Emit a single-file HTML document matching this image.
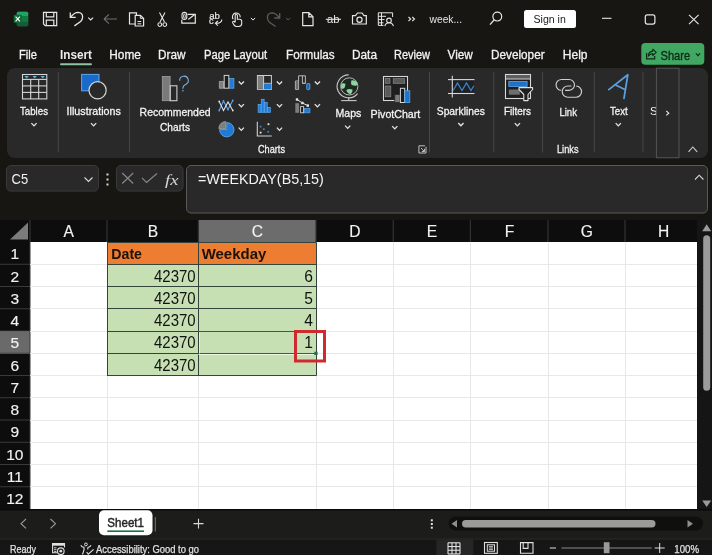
<!DOCTYPE html>
<html><head><meta charset="utf-8">
<style>
*{margin:0;padding:0}
html,body{width:712px;height:555px;overflow:hidden;background:#181613}
svg{display:block;font-family:"Liberation Sans",sans-serif;will-change:transform}
</style></head><body>
<svg width="712" height="555" viewBox="0 0 712 555">
<rect x="0" y="0" width="712" height="555" rx="0" fill="#181613"/>
<rect x="16.8" y="11.7" width="11.4" height="14.5" rx="1.5" fill="#107c41"/>
<rect x="16.8" y="11.7" width="11.4" height="4.8" rx="1.5" fill="#21a366"/>
<rect x="16.8" y="21.4" width="11.4" height="4.8" rx="1.5" fill="#185c37"/>
<rect x="16.8" y="16" width="11.4" height="5.5" rx="0" fill="#107c41"/>
<rect x="13.7" y="14.8" width="8.2" height="8.2" rx="1" fill="#0d6b37"/>
<path d="M15.6,16.6 L19.9,21.3 M19.9,16.6 L15.6,21.3" stroke="#ffffff" fill="none" stroke-width="1.1" />
<path d="M43.5,12.3 H56.7 V25.6 H45.2 L43.5,23.9 Z" stroke="#e6e6e6" fill="none" stroke-width="1.2" />
<path d="M46.3,12.3 V16.9 H53.8 V12.3" stroke="#e6e6e6" fill="none" stroke-width="1.2" />
<path d="M46.3,25.6 V20.2 H53.8 V25.6" stroke="#e6e6e6" fill="none" stroke-width="1.2" />
<path d="M70.3,12.4 V17.4 H75.7" stroke="#e6e6e6" fill="none" stroke-width="1.3" />
<path d="M70.8,16.9 Q74.5,12.3 78,12.3 Q82.6,12.5 82.6,17 Q82.6,19.6 80.6,21.6 L74.4,25.9" stroke="#e6e6e6" fill="none" stroke-width="1.3" />
<path d="M88.3,17.6 L90.7,20.0 L93.10000000000001,17.6" stroke="#e6e6e6" fill="none" stroke-width="1.1" />
<path d="M104,19 H117 M104,19 L109,14.4 M104,19 L109,23.6" stroke="#6e6e6e" fill="none" stroke-width="1.1" />
<path d="M135,24 H129.5 V12.8 H136.5 V15" stroke="#e6e6e6" fill="none" stroke-width="1.2" />
<path d="M135.2,15.4 H140.5 L143.6,18.5 V26 H135.2 Z" stroke="#e6e6e6" fill="none" stroke-width="1.2" />
<path d="M137.5,21.5 H141.2 M137.5,23.8 H141.2" stroke="#e6e6e6" fill="none" stroke-width="1" />
<path d="M140.3,15.6 V18.3 H143.4" stroke="#e6e6e6" fill="none" stroke-width="1" />
<path d="M159.5,12.5 L164.5,22 M165,12.5 L160,22" stroke="#e6e6e6" fill="none" stroke-width="1.1" />
<circle cx="159.8" cy="24.6" r="1.9" stroke="#e6e6e6" fill="none" stroke-width="1.1"/>
<circle cx="164.8" cy="24.6" r="1.9" stroke="#e6e6e6" fill="none" stroke-width="1.1"/>
<path d="M187.6,14.3 H195.3 V23.2 H181.8 V19.8" stroke="#e6e6e6" fill="none" stroke-width="1.2" />
<path d="M188.3,19.4 L194.7,14.6" stroke="#e6e6e6" fill="none" stroke-width="1.2" />
<rect x="182" y="12.4" width="4.8" height="7" rx="2.4" fill="none" stroke="#e6e6e6" stroke-width="1.1"/>
<rect x="183.6" y="14.2" width="1.7" height="3.8" rx="0.85" fill="none" stroke="#e6e6e6" stroke-width="0.9"/>
<text x="209.2" y="18.9" font-size="9.2" fill="#e6e6e6" stroke="#e6e6e6" stroke-width="0.2" textLength="10.7" lengthAdjust="spacingAndGlyphs">ab</text>
<text x="209.1" y="24.4" font-size="9.2" fill="#e6e6e6" stroke="#e6e6e6" stroke-width="0.2">c</text>
<path d="M221.8,19.4 Q221.8,23.3 215.6,23.3 M217.9,21 L215.4,23.3 L217.9,25.6" stroke="#e6e6e6" fill="none" stroke-width="1.1" />
<path d="M233.2,19.2 A3.9,3.9 0 1 1 240.2,17.2" stroke="#e6e6e6" fill="none" stroke-width="1.1" />
<path d="M235.2,22 V15.4 A1.1,1.1 0 0 1 237.4,15.4 V19.2 H239.6 A2.1,2.1 0 0 1 241.7,21.3 V23.6 A2.9,2.9 0 0 1 238.8,26.5 H236.6 A3,3 0 0 1 234.1,25.1 L232.7,22.8 A1,1 0 0 1 234.5,21.8 L235.2,22.6" stroke="#e6e6e6" fill="none" stroke-width="1.1" />
<path d="M250.9,17.9 L253,20.1 L255.1,17.9" stroke="#e6e6e6" fill="none" stroke-width="1" />
<g transform="translate(350,0.6) scale(-1,1)"><path d="M70.3,12.4 V17.4 H75.7" stroke="#5c5c5c" fill="none" stroke-width="1.3"/><path d="M70.8,16.9 Q74.5,12.3 78,12.3 Q82.6,12.5 82.6,17 Q82.6,19.6 80.6,21.6 L74.4,25.9" stroke="#5c5c5c" fill="none" stroke-width="1.3"/></g>
<path d="M286.09999999999997,17.9 L288.2,20.1 L290.3,17.9" stroke="#5c5c5c" fill="none" stroke-width="1" />
<path d="M302.7,12.6 H308.8 L313,16.8 V25.6 H302.7 Z M308.8,12.6 V16.8 H313" stroke="#e6e6e6" fill="none" stroke-width="1.2" />
<text x="327" y="22.5" font-size="11" fill="#e6e6e6" textLength="12.5" lengthAdjust="spacingAndGlyphs">ab</text>
<line x1="325.8" y1="19.3" x2="341" y2="19.3" stroke="#e6e6e6" stroke-width="1.1"/>
<path d="M352.5,15.6 H355.5 L357.5,13 H362 L364,15.6 H366.3 V24 H352.5 Z" stroke="#e6e6e6" fill="none" stroke-width="1.2" />
<circle cx="359.5" cy="19.7" r="2.6" stroke="#e6e6e6" fill="none" stroke-width="1.2"/>
<path d="M378.3,12.8 H392.6 V17 M378.3,12.8 V25.4 H383.5 M378.3,16.3 H386 M381.5,12.8 V25.4 M378.3,19.6 H384.5 M378.3,22.8 H383.5" stroke="#e6e6e6" fill="none" stroke-width="1" />
<circle cx="389" cy="20.4" r="2.3" stroke="#e6e6e6" fill="none" stroke-width="1.1"/>
<path d="M384.8,26.2 A4.4,4.4 0 0 1 393.4,26.2" stroke="#e6e6e6" fill="none" stroke-width="1.1" />
<path d="M408.5,17 L410.7,19 L408.5,21 M412.3,17 L414.5,19 L412.3,21" stroke="#e6e6e6" fill="none" stroke-width="1.1" />
<text x="429.6" y="23.2" font-size="11.7" fill="#e6e6e6" textLength="32.4" lengthAdjust="spacingAndGlyphs">week...</text>
<circle cx="497.3" cy="16.6" r="4.4" stroke="#e6e6e6" fill="none" stroke-width="1.2"/>
<line x1="494" y1="20" x2="490" y2="24.6" stroke="#e6e6e6" stroke-width="1.3"/>
<rect x="524" y="10" width="52" height="18" rx="2.5" fill="#ffffff"/>
<text x="533.5" y="23" font-size="11.7" fill="#1b1b1b" textLength="32.3" lengthAdjust="spacingAndGlyphs">Sign in</text>
<line x1="602" y1="18.3" x2="611.5" y2="18.3" stroke="#e6e6e6" stroke-width="1.1"/>
<rect x="645.3" y="14.9" width="9.6" height="9.2" rx="2" fill="none" stroke="#e6e6e6" stroke-width="1.2"/>
<path d="M689,14.8 L698.6,24.2 M698.6,14.8 L689,24.2" stroke="#e6e6e6" fill="none" stroke-width="1.1" />
<text x="19" y="59.4" font-size="12" fill="#f2f2f2" stroke="#f2f2f2" stroke-width="0.3" textLength="18" lengthAdjust="spacingAndGlyphs">File</text>
<text x="109.3" y="59.4" font-size="12" fill="#f2f2f2" stroke="#f2f2f2" stroke-width="0.3" textLength="31.6" lengthAdjust="spacingAndGlyphs">Home</text>
<text x="158" y="59.4" font-size="12" fill="#f2f2f2" stroke="#f2f2f2" stroke-width="0.3" textLength="27.5" lengthAdjust="spacingAndGlyphs">Draw</text>
<text x="204" y="59.4" font-size="12" fill="#f2f2f2" stroke="#f2f2f2" stroke-width="0.3" textLength="63" lengthAdjust="spacingAndGlyphs">Page Layout</text>
<text x="286" y="59.4" font-size="12" fill="#f2f2f2" stroke="#f2f2f2" stroke-width="0.3" textLength="48.7" lengthAdjust="spacingAndGlyphs">Formulas</text>
<text x="352" y="59.4" font-size="12" fill="#f2f2f2" stroke="#f2f2f2" stroke-width="0.3" textLength="25" lengthAdjust="spacingAndGlyphs">Data</text>
<text x="394" y="59.4" font-size="12" fill="#f2f2f2" stroke="#f2f2f2" stroke-width="0.3" textLength="36" lengthAdjust="spacingAndGlyphs">Review</text>
<text x="447.6" y="59.4" font-size="12" fill="#f2f2f2" stroke="#f2f2f2" stroke-width="0.3" textLength="25.2" lengthAdjust="spacingAndGlyphs">View</text>
<text x="491" y="59.4" font-size="12" fill="#f2f2f2" stroke="#f2f2f2" stroke-width="0.3" textLength="53.6" lengthAdjust="spacingAndGlyphs">Developer</text>
<text x="562.8" y="59.4" font-size="12" fill="#f2f2f2" stroke="#f2f2f2" stroke-width="0.3" textLength="24.7" lengthAdjust="spacingAndGlyphs">Help</text>
<text x="60" y="59.4" font-size="12" fill="#ececec" textLength="32" lengthAdjust="spacingAndGlyphs" font-weight="bold">Insert</text>
<rect x="60" y="63.2" width="32" height="2" rx="1" fill="#8fc4a3"/>
<rect x="641.3" y="43" width="63" height="21.8" rx="4" fill="#40a863"/>
<path d="M646.6,53 V58.8 H654.7 V55.9" stroke="#0e2a17" fill="none" stroke-width="1.2" />
<path d="M648.2,56.2 Q648.6,51.4 652.8,51.1 V49.2 L656.2,52.4 L652.8,55.6 V53.6 Q650.2,53.6 648.2,56.2 Z" stroke="#0e2a17" fill="none" stroke-width="1.1" stroke-linejoin="round"/>
<text x="660.5" y="59.7" font-size="12.2" fill="#0e2a17" stroke="#0e2a17" stroke-width="0.35" textLength="29.6" lengthAdjust="spacingAndGlyphs">Share</text>
<path d="M695.9,53.4 L698,55.6 L700.1,53.4" stroke="#0e2a17" fill="none" stroke-width="1.2" />
<rect x="7" y="68" width="701" height="90" rx="8" fill="#292929"/>
<line x1="58.3" y1="72" x2="58.3" y2="152.5" stroke="#474747" stroke-width="1"/>
<line x1="129.4" y1="72" x2="129.4" y2="152.5" stroke="#474747" stroke-width="1"/>
<line x1="429.5" y1="72" x2="429.5" y2="152.5" stroke="#474747" stroke-width="1"/>
<line x1="493.8" y1="72" x2="493.8" y2="152.5" stroke="#474747" stroke-width="1"/>
<line x1="542.6" y1="72" x2="542.6" y2="152.5" stroke="#474747" stroke-width="1"/>
<line x1="594.3" y1="72" x2="594.3" y2="152.5" stroke="#474747" stroke-width="1"/>
<line x1="643" y1="72" x2="643" y2="152.5" stroke="#474747" stroke-width="1"/>
<rect x="22.5" y="74.5" width="24.3" height="24.4" rx="0" fill="none" stroke="#d4d4d4" stroke-width="1.1"/>
<line x1="22.5" y1="79.4" x2="46.8" y2="79.4" stroke="#d4d4d4" stroke-width="1.1"/>
<line x1="22.5" y1="85.9" x2="46.8" y2="85.9" stroke="#d4d4d4" stroke-width="1.1"/>
<line x1="22.5" y1="92.4" x2="46.8" y2="92.4" stroke="#d4d4d4" stroke-width="1.1"/>
<line x1="30.7" y1="79.4" x2="30.7" y2="98.9" stroke="#d4d4d4" stroke-width="1.1"/>
<line x1="38.7" y1="79.4" x2="38.7" y2="98.9" stroke="#d4d4d4" stroke-width="1.1"/>
<path d="M24.400000000000002,76.1 H28.8 L26.6,78.5 Z" stroke="none" fill="#5eb4e6" stroke-width="1" />
<path d="M32.5,76.1 H36.900000000000006 L34.7,78.5 Z" stroke="none" fill="#5eb4e6" stroke-width="1" />
<path d="M40.5,76.1 H44.900000000000006 L42.7,78.5 Z" stroke="none" fill="#5eb4e6" stroke-width="1" />
<text x="20" y="114.6" font-size="11.8" fill="#f4f4f4" stroke="#f4f4f4" stroke-width="0.3" textLength="28" lengthAdjust="spacingAndGlyphs">Tables</text>
<path d="M31.4,123.15 L34,125.85 L36.6,123.15" stroke="#e6e6e6" fill="none" stroke-width="1.35" />
<rect x="81.6" y="74.4" width="17.4" height="16.4" rx="0" fill="#1a6acb" stroke="#5aa8ee" stroke-width="1"/>
<circle cx="97.6" cy="90.3" r="8.6" fill="#292929" stroke="#d4d4d4" stroke-width="1.2"/>
<text x="66.6" y="114.6" font-size="11.8" fill="#f4f4f4" stroke="#f4f4f4" stroke-width="0.3" textLength="54.2" lengthAdjust="spacingAndGlyphs">Illustrations</text>
<path d="M91.0,123.15 L93.6,125.85 L96.19999999999999,123.15" stroke="#e6e6e6" fill="none" stroke-width="1.35" />
<rect x="162.3" y="76.5" width="7.8" height="24.2" rx="0" fill="#7a7a7a" stroke="#a0a0a0" stroke-width="0.8"/>
<rect x="170.2" y="85.8" width="6.7" height="14.9" rx="0" fill="none" stroke="#cfcfcf" stroke-width="1.1"/>
<path d="M179.7,80.8 A4.3,4.3 0 1 1 185.7,84.4 Q182.9,85.6 182.9,88.2 V88.8" stroke="#74b2e0" fill="none" stroke-width="1.1" />
<circle cx="182.9" cy="90.7" r="0.8" fill="#74b2e0"/>
<text x="139.6" y="116.2" font-size="11.8" fill="#f4f4f4" stroke="#f4f4f4" stroke-width="0.3" textLength="71" lengthAdjust="spacingAndGlyphs">Recommended</text>
<text x="160" y="130.9" font-size="11.8" fill="#f4f4f4" stroke="#f4f4f4" stroke-width="0.3" textLength="30" lengthAdjust="spacingAndGlyphs">Charts</text>
<rect x="219.3" y="81.6" width="4.2" height="6.6" rx="0" fill="#7e7e7e" stroke="#a8a8a8" stroke-width="0.8"/>
<rect x="224.2" y="75.4" width="4.6" height="12.8" rx="0" fill="#1e1e1e" stroke="#cfcfcf" stroke-width="1"/>
<rect x="229.5" y="78.5" width="4.4" height="9.7" rx="0" fill="#1f7bd6" stroke="#5aa6ea" stroke-width="0.8"/>
<path d="M238.70000000000002,81.45 L241.3,84.14999999999999 L243.9,81.45" stroke="#e6e6e6" fill="none" stroke-width="1.35" />
<rect x="257.4" y="75.5" width="14" height="13.8" rx="0" fill="none" stroke="#cfcfcf" stroke-width="1"/>
<rect x="257.9" y="76" width="5.5" height="12.8" rx="0" fill="#7e7e7e"/>
<line x1="263.6" y1="75.5" x2="263.6" y2="89.3" stroke="#cfcfcf" stroke-width="1"/>
<rect x="264.1" y="83.6" width="7.3" height="5.3" rx="0" fill="#1f7bd6"/>
<line x1="263.6" y1="83.3" x2="271.4" y2="83.3" stroke="#cfcfcf" stroke-width="0.8"/>
<path d="M276.9,81.45 L279.5,84.14999999999999 L282.1,81.45" stroke="#e6e6e6" fill="none" stroke-width="1.35" />
<path d="M295.4,89.4 V81 H298.6 V75.8 H305.4 V83.3 H302.4 V75.8 M298.6,81 V89.4 H295.4 M302.4,83.3 H305.4" stroke="#b8b8b8" fill="none" stroke-width="1" />
<rect x="295.9" y="81.5" width="2.2" height="7.4" rx="0" fill="#6e6e6e"/>
<rect x="306.8" y="83.6" width="3" height="6" rx="0.5" fill="#1f5f9f" stroke="#5aa6ea" stroke-width="0.9"/>
<path d="M314.79999999999995,81.45 L317.4,84.14999999999999 L320.0,81.45" stroke="#e6e6e6" fill="none" stroke-width="1.35" />
<path d="M219.2,110.5 L223.5,101 L228,109.5 L232.8,100.5" stroke="#5aa6ea" fill="none" stroke-width="1.1" />
<path d="M219.2,101.5 L223.5,110.5 L228,102 L232.8,110.5" stroke="#e0e0e0" fill="none" stroke-width="1.1" />
<circle cx="219.2" cy="110.5" r="0.9" fill="#5aa6ea"/>
<circle cx="223.5" cy="101" r="0.9" fill="#5aa6ea"/>
<circle cx="228" cy="109.5" r="0.9" fill="#5aa6ea"/>
<circle cx="232.8" cy="100.5" r="0.9" fill="#5aa6ea"/>
<circle cx="219.2" cy="101.5" r="0.9" fill="#e0e0e0"/>
<circle cx="232.8" cy="110.5" r="0.9" fill="#e0e0e0"/>
<path d="M238.70000000000002,104.15 L241.3,106.85 L243.9,104.15" stroke="#e6e6e6" fill="none" stroke-width="1.35" />
<rect x="258.2" y="104.5" width="2.8" height="7.799999999999997" rx="0" fill="#1f7bd6" stroke="#5aa6ea" stroke-width="0.8"/>
<rect x="261.3" y="99.3" width="2.8" height="13.0" rx="0" fill="#1f7bd6" stroke="#5aa6ea" stroke-width="0.8"/>
<rect x="264.4" y="102.5" width="2.8" height="9.799999999999997" rx="0" fill="#1f7bd6" stroke="#5aa6ea" stroke-width="0.8"/>
<rect x="267.5" y="107.5" width="2.8" height="4.799999999999997" rx="0" fill="#1f7bd6" stroke="#5aa6ea" stroke-width="0.8"/>
<path d="M276.9,104.15 L279.5,106.85 L282.1,104.15" stroke="#e6e6e6" fill="none" stroke-width="1.35" />
<rect x="295.3" y="103.2" width="3.8" height="9.6" rx="0" fill="#7e7e7e"/>
<rect x="300.6" y="106.6" width="3" height="6.2" rx="0" fill="#1e1e1e" stroke="#cfcfcf" stroke-width="0.9"/>
<rect x="304.6" y="108.6" width="5.3" height="4.2" rx="0" fill="#1f7bd6" stroke="#5aa6ea" stroke-width="0.7"/>
<path d="M297,99.5 L302.4,103 L307.8,105.6" stroke="#e0e0e0" fill="none" stroke-width="1" />
<rect x="295.8" y="98.3" width="2.4" height="2.4" fill="#e8e8e8"/>
<rect x="301.2" y="101.8" width="2.4" height="2.4" fill="#e8e8e8"/>
<rect x="306.6" y="104.39999999999999" width="2.4" height="2.4" fill="#e8e8e8"/>
<path d="M314.79999999999995,104.15 L317.4,106.85 L320.0,104.15" stroke="#e6e6e6" fill="none" stroke-width="1.35" />
<path d="M226.8,129.5 V122.5 A7.2,7.2 0 1 1 219.6,129.5 Z" stroke="#5aa6ea" fill="#1f7bd6" stroke-width="0.9" />
<path d="M225.8,128.5 H218.8 A7,7 0 0 1 225.8,121.5 Z" stroke="#a8a8a8" fill="#7e7e7e" stroke-width="0.7" />
<path d="M238.70000000000002,127.65 L241.3,130.35 L243.9,127.65" stroke="#e6e6e6" fill="none" stroke-width="1.35" />
<path d="M257.3,121.8 V136 H271.8" stroke="#cfcfcf" fill="none" stroke-width="1.1" />
<rect x="267.6" y="123.3" width="1.8" height="1.8" fill="#e8e8e8"/>
<rect x="259.70000000000005" y="131.7" width="1.8" height="1.8" fill="#e8e8e8"/>
<rect x="259.70000000000005" y="125.69999999999999" width="1.8" height="1.8" fill="#3a7fc0"/>
<rect x="262.90000000000003" y="128.29999999999998" width="1.8" height="1.8" fill="#3a7fc0"/>
<rect x="267.3" y="130.9" width="1.8" height="1.8" fill="#3a7fc0"/>
<path d="M276.9,127.65 L279.5,130.35 L282.1,127.65" stroke="#e6e6e6" fill="none" stroke-width="1.35" />
<text x="258" y="152.5" font-size="11.4" fill="#f4f4f4" stroke="#f4f4f4" stroke-width="0.3" textLength="27" lengthAdjust="spacingAndGlyphs">Charts</text>
<circle cx="349.3" cy="86.4" r="8.6" fill="#1d2a21" stroke="#c8c8c8" stroke-width="0.9"/>
<path d="M351.5,80.2 Q355,79.8 357.3,82.5 Q357.6,85.5 355.5,86 Q353.5,84.8 351.8,85.3 Q350.3,83 351.5,80.2 Z" stroke="none" fill="#8fd4a2" stroke-width="1" />
<path d="M341.2,84 Q343.5,82.6 345.5,84 Q345.3,87 344,88.3 Q342,89.5 341,88 Z" stroke="none" fill="#8fd4a2" stroke-width="1" />
<path d="M346.3,90 Q349,88.3 352.5,89.5 Q353,92.5 350.5,94.2 Q347.5,94 346.3,90 Z" stroke="none" fill="#8fd4a2" stroke-width="1" />
<path d="M348.7,74.9 A11.5,11.5 0 1 0 357.6,93.6" stroke="#c8c8c8" fill="none" stroke-width="1.1" />
<line x1="348.7" y1="97.5" x2="348.7" y2="100.6" stroke="#c8c8c8" stroke-width="1.1"/>
<line x1="341.2" y1="100.6" x2="356.6" y2="100.6" stroke="#c8c8c8" stroke-width="1.1"/>
<text x="335.5" y="117.2" font-size="11.8" fill="#f4f4f4" stroke="#f4f4f4" stroke-width="0.3" textLength="25.8" lengthAdjust="spacingAndGlyphs">Maps</text>
<path d="M345.09999999999997,125.65 L347.7,128.35 L350.3,125.65" stroke="#e6e6e6" fill="none" stroke-width="1.35" />
<rect x="383.5" y="76.5" width="24" height="24" rx="0" fill="#1e1e1e" stroke="#d8d8d8" stroke-width="1.1"/>
<rect x="385.2" y="78.5" width="4.8" height="4.8" rx="0" fill="#5a5a5a" stroke="#8a8a8a" stroke-width="0.7"/>
<rect x="393.2" y="78.7" width="11.5" height="4.6" rx="0" fill="#5a5a5a" stroke="#8a8a8a" stroke-width="0.7"/>
<rect x="385.2" y="86" width="5.6" height="10.8" rx="0" fill="#5a5a5a" stroke="#8a8a8a" stroke-width="0.7"/>
<rect x="394.8" y="94.5" width="5.2" height="8" rx="0" fill="#7a7a7a" stroke="#292929" stroke-width="0.8"/>
<rect x="400.4" y="88.3" width="4.3" height="14.2" rx="0" fill="#1a1a1a" stroke="#d8d8d8" stroke-width="1"/>
<rect x="404.8" y="90.8" width="5" height="11.7" rx="0" fill="#1f72c8" stroke="#5aa6ea" stroke-width="0.8"/>
<text x="370.6" y="117.7" font-size="11.8" fill="#f4f4f4" stroke="#f4f4f4" stroke-width="0.3" textLength="49.7" lengthAdjust="spacingAndGlyphs">PivotChart</text>
<path d="M392.2,126.15 L394.8,128.85 L397.40000000000003,126.15" stroke="#e6e6e6" fill="none" stroke-width="1.35" />
<path d="M418.9,145.8 H426 V153 H418.9 Z" stroke="#bdbdbd" fill="none" stroke-width="1" />
<path d="M421,148 L424.5,151.5 M424.5,148.8 V151.5 H421.8" stroke="#bdbdbd" fill="none" stroke-width="1" />
<rect x="425" y="144.8" width="2" height="2" rx="0" fill="#292929"/>
<rect x="452.5" y="80" width="21.5" height="13.2" rx="0" fill="#1d2126"/>
<line x1="448" y1="79.6" x2="474.5" y2="79.6" stroke="#d8d8d8" stroke-width="1.1"/>
<line x1="448" y1="93.5" x2="474.5" y2="93.5" stroke="#d8d8d8" stroke-width="1.1"/>
<line x1="452.3" y1="75.8" x2="452.3" y2="97.5" stroke="#d8d8d8" stroke-width="1.1"/>
<path d="M453.2,90.5 L457.5,83 L462,90.5 L466.5,83 L471,90.5 L473.8,85.8" stroke="#3f86c8" fill="none" stroke-width="1.2" />
<text x="436.8" y="115.2" font-size="11.8" fill="#f4f4f4" stroke="#f4f4f4" stroke-width="0.3" textLength="48" lengthAdjust="spacingAndGlyphs">Sparklines</text>
<path d="M458.29999999999995,123.05000000000001 L460.9,125.75 L463.5,123.05000000000001" stroke="#e6e6e6" fill="none" stroke-width="1.35" />
<rect x="505.5" y="74.5" width="25" height="24" rx="0" fill="#1e1e1e" stroke="#d8d8d8" stroke-width="1.1"/>
<rect x="506" y="75" width="24" height="3.8" rx="0" fill="#5e5e5e"/>
<line x1="505.5" y1="79" x2="530.5" y2="79" stroke="#d8d8d8" stroke-width="1"/>
<rect x="508.8" y="81.4" width="18.3" height="5" rx="0" fill="#1f72c8" stroke="#5aa6ea" stroke-width="0.8"/>
<rect x="508.8" y="89.5" width="11" height="5.2" rx="0" fill="#6e6e6e"/>
<path d="M519,87.6 H532.6 V89.5 L528,94.5 V100.6 H523.8 V94.5 L519,89.5 Z" stroke="#e0e0e0" fill="#1e1e1e" stroke-width="1.1" stroke-linejoin="round"/>
<text x="504" y="115" font-size="11.8" fill="#f4f4f4" stroke="#f4f4f4" stroke-width="0.3" textLength="27" lengthAdjust="spacingAndGlyphs">Filters</text>
<path d="M514.8,123.15 L517.4,125.85 L520.0,123.15" stroke="#e6e6e6" fill="none" stroke-width="1.35" />
<path d="M561.2,90.3 A5.4,5.4 0 0 1 561.7,79.5 H569.1 A5.4,5.4 0 0 1 569.1,90.3 H565.1" stroke="#cfcfcf" fill="none" stroke-width="1.15" />
<path d="M576.2,86 A5.6,5.6 0 0 1 575.7,97.2 H567.8 A5.6,5.6 0 0 1 567.8,86 H571.4" stroke="#cfcfcf" fill="none" stroke-width="1.15" />
<text x="559.4" y="116" font-size="11.8" fill="#f4f4f4" stroke="#f4f4f4" stroke-width="0.3" textLength="17.6" lengthAdjust="spacingAndGlyphs">Link</text>
<text x="557" y="153" font-size="11.4" fill="#f4f4f4" stroke="#f4f4f4" stroke-width="0.3" textLength="21.5" lengthAdjust="spacingAndGlyphs">Links</text>
<path d="M608.8,89.6 L627.8,74.8 L624,98.4 M615.6,85 L625.4,89.8" stroke="#5a9fdc" fill="none" stroke-width="1.8" stroke-linejoin="round" stroke-linecap="round"/>
<text x="610" y="115" font-size="11.8" fill="#f4f4f4" stroke="#f4f4f4" stroke-width="0.3" textLength="17.7" lengthAdjust="spacingAndGlyphs">Text</text>
<path d="M615.6999999999999,123.15 L618.3,125.85 L620.9,123.15" stroke="#e6e6e6" fill="none" stroke-width="1.35" />
<text x="650" y="115.2" font-size="11.8" fill="#f4f4f4" textLength="7.5" lengthAdjust="spacingAndGlyphs">S</text>
<rect x="656.4" y="68.2" width="22.6" height="89.6" rx="0" fill="#292929" stroke="#555555" stroke-width="1"/>
<path d="M666.3,111 L668.8,113.2 L666.3,115.4" stroke="#e6e6e6" fill="none" stroke-width="1.1" />
<path d="M688.5,151.8 L692.8,147 L697.2,151.8" stroke="#cfcfcf" fill="none" stroke-width="1.1" />
<rect x="6.5" y="165.5" width="92" height="25.6" rx="4.5" fill="#292929" stroke="#3a3a3a" stroke-width="1"/>
<text x="11.5" y="184" font-size="13.8" fill="#f0f0f0" textLength="16.6" lengthAdjust="spacingAndGlyphs">C5</text>
<path d="M84.5,177.5 L88.5,181.5 L92.5,177.5" stroke="#d8d8d8" fill="none" stroke-width="1.1" />
<rect x="106.5" y="173.5" width="2" height="2" rx="0" fill="#d8d8d8"/>
<rect x="106.5" y="178.5" width="2" height="2" rx="0" fill="#d8d8d8"/>
<rect x="106.5" y="183.5" width="2" height="2" rx="0" fill="#d8d8d8"/>
<rect x="116.5" y="165.5" width="66.5" height="25.6" rx="4.5" fill="#292929" stroke="#3a3a3a" stroke-width="1"/>
<path d="M122.2,173 L133.2,183.5 M133.2,173 L122.2,183.5" stroke="#8a8a8a" fill="none" stroke-width="1.1" />
<path d="M142,177.8 L146.5,182.5 L157,173.5" stroke="#8a8a8a" fill="none" stroke-width="1.1" />
<text x="165" y="184.5" font-family="Liberation Serif" font-style="italic" font-size="15" fill="#d8d8d8" textLength="13.5" lengthAdjust="spacingAndGlyphs">fx</text>
<rect x="186.5" y="165.5" width="521" height="47.5" rx="4.5" fill="#292929" stroke="#5a5a5a" stroke-width="1"/>
<text x="198" y="184.4" font-size="15" fill="#f4f4f4" textLength="125.8" lengthAdjust="spacingAndGlyphs">=WEEKDAY(B5,15)</text>
<path d="M695,179.5 L699.2,175.2 L703.4,179.5" stroke="#d8d8d8" fill="none" stroke-width="1.1" />
<rect x="0" y="220" width="697" height="22" rx="0" fill="#0d0d0d"/>
<rect x="0" y="242" width="30" height="267" rx="0" fill="#0d0d0d"/>
<rect x="30" y="242" width="667" height="267" rx="0" fill="#ffffff"/>
<rect x="198.8" y="220" width="117" height="22" rx="0" fill="#6c6c6c"/>
<rect x="0" y="331.0" width="30" height="22.25" rx="0" fill="#6a6a6a"/>
<line x1="0" y1="331.5" x2="29.5" y2="331.5" stroke="#8a8a8a" stroke-width="1"/>
<line x1="0" y1="353.5" x2="29.5" y2="353.5" stroke="#8a8a8a" stroke-width="1"/>
<path d="M10,239.6 L28,239.6 L28,222.6 Z" stroke="none" fill="#7c7c7c" stroke-width="1" />
<line x1="107" y1="220" x2="107" y2="242" stroke="#3a3a3a" stroke-width="1"/>
<line x1="198.3" y1="220" x2="198.3" y2="242" stroke="#3a3a3a" stroke-width="1"/>
<line x1="316" y1="220" x2="316" y2="242" stroke="#3a3a3a" stroke-width="1"/>
<line x1="393.2" y1="220" x2="393.2" y2="242" stroke="#3a3a3a" stroke-width="1"/>
<line x1="470.3" y1="220" x2="470.3" y2="242" stroke="#3a3a3a" stroke-width="1"/>
<line x1="548" y1="220" x2="548" y2="242" stroke="#3a3a3a" stroke-width="1"/>
<line x1="625" y1="220" x2="625" y2="242" stroke="#3a3a3a" stroke-width="1"/>
<line x1="0" y1="264.25" x2="30" y2="264.25" stroke="#3a3a3a" stroke-width="1"/>
<line x1="0" y1="286.5" x2="30" y2="286.5" stroke="#3a3a3a" stroke-width="1"/>
<line x1="0" y1="308.75" x2="30" y2="308.75" stroke="#3a3a3a" stroke-width="1"/>
<line x1="0" y1="331.0" x2="30" y2="331.0" stroke="#3a3a3a" stroke-width="1"/>
<line x1="0" y1="353.25" x2="30" y2="353.25" stroke="#3a3a3a" stroke-width="1"/>
<line x1="0" y1="375.5" x2="30" y2="375.5" stroke="#3a3a3a" stroke-width="1"/>
<line x1="0" y1="397.75" x2="30" y2="397.75" stroke="#3a3a3a" stroke-width="1"/>
<line x1="0" y1="420.0" x2="30" y2="420.0" stroke="#3a3a3a" stroke-width="1"/>
<line x1="0" y1="442.25" x2="30" y2="442.25" stroke="#3a3a3a" stroke-width="1"/>
<line x1="0" y1="464.5" x2="30" y2="464.5" stroke="#3a3a3a" stroke-width="1"/>
<line x1="0" y1="486.75" x2="30" y2="486.75" stroke="#3a3a3a" stroke-width="1"/>
<line x1="30" y1="220" x2="30" y2="509" stroke="#3a3a3a" stroke-width="1"/>
<text x="68.8" y="237" font-size="15.6" fill="#f2f2f2" stroke="#f2f2f2" stroke-width="0.15" text-anchor="middle">A</text>
<text x="152.95000000000002" y="237" font-size="15.6" fill="#f2f2f2" stroke="#f2f2f2" stroke-width="0.15" text-anchor="middle">B</text>
<text x="257.45" y="237" font-size="15.6" fill="#f2f2f2" stroke="#f2f2f2" stroke-width="0.15" text-anchor="middle">C</text>
<text x="354.90000000000003" y="237" font-size="15.6" fill="#f2f2f2" stroke="#f2f2f2" stroke-width="0.15" text-anchor="middle">D</text>
<text x="432.05" y="237" font-size="15.6" fill="#f2f2f2" stroke="#f2f2f2" stroke-width="0.15" text-anchor="middle">E</text>
<text x="509.45" y="237" font-size="15.6" fill="#f2f2f2" stroke="#f2f2f2" stroke-width="0.15" text-anchor="middle">F</text>
<text x="586.8" y="237" font-size="15.6" fill="#f2f2f2" stroke="#f2f2f2" stroke-width="0.15" text-anchor="middle">G</text>
<text x="663.5999999999999" y="237" font-size="15.6" fill="#f2f2f2" stroke="#f2f2f2" stroke-width="0.15" text-anchor="middle">H</text>
<text x="14.8" y="259.4" font-size="15.5" fill="#f2f2f2" stroke="#f2f2f2" stroke-width="0.15" text-anchor="middle">1</text>
<text x="14.8" y="281.65" font-size="15.5" fill="#f2f2f2" stroke="#f2f2f2" stroke-width="0.15" text-anchor="middle">2</text>
<text x="14.8" y="303.9" font-size="15.5" fill="#f2f2f2" stroke="#f2f2f2" stroke-width="0.15" text-anchor="middle">3</text>
<text x="14.8" y="326.15" font-size="15.5" fill="#f2f2f2" stroke="#f2f2f2" stroke-width="0.15" text-anchor="middle">4</text>
<text x="14.8" y="348.4" font-size="15.5" fill="#f2f2f2" stroke="#f2f2f2" stroke-width="0.15" text-anchor="middle">5</text>
<text x="14.8" y="370.65" font-size="15.5" fill="#f2f2f2" stroke="#f2f2f2" stroke-width="0.15" text-anchor="middle">6</text>
<text x="14.8" y="392.9" font-size="15.5" fill="#f2f2f2" stroke="#f2f2f2" stroke-width="0.15" text-anchor="middle">7</text>
<text x="14.8" y="415.15" font-size="15.5" fill="#f2f2f2" stroke="#f2f2f2" stroke-width="0.15" text-anchor="middle">8</text>
<text x="14.8" y="437.4" font-size="15.5" fill="#f2f2f2" stroke="#f2f2f2" stroke-width="0.15" text-anchor="middle">9</text>
<text x="14.8" y="459.65" font-size="15.5" fill="#f2f2f2" stroke="#f2f2f2" stroke-width="0.15" text-anchor="middle">10</text>
<text x="14.8" y="481.9" font-size="15.5" fill="#f2f2f2" stroke="#f2f2f2" stroke-width="0.15" text-anchor="middle">11</text>
<text x="14.8" y="504.15" font-size="15.5" fill="#f2f2f2" stroke="#f2f2f2" stroke-width="0.15" text-anchor="middle">12</text>
<line x1="30" y1="264.5" x2="697" y2="264.5" stroke="#e8e8e8" stroke-width="1"/>
<line x1="30" y1="286.5" x2="697" y2="286.5" stroke="#e8e8e8" stroke-width="1"/>
<line x1="30" y1="308.5" x2="697" y2="308.5" stroke="#e8e8e8" stroke-width="1"/>
<line x1="30" y1="331.5" x2="697" y2="331.5" stroke="#e8e8e8" stroke-width="1"/>
<line x1="30" y1="353.5" x2="697" y2="353.5" stroke="#e8e8e8" stroke-width="1"/>
<line x1="30" y1="375.5" x2="697" y2="375.5" stroke="#e8e8e8" stroke-width="1"/>
<line x1="30" y1="397.5" x2="697" y2="397.5" stroke="#e8e8e8" stroke-width="1"/>
<line x1="30" y1="420.5" x2="697" y2="420.5" stroke="#e8e8e8" stroke-width="1"/>
<line x1="30" y1="442.5" x2="697" y2="442.5" stroke="#e8e8e8" stroke-width="1"/>
<line x1="30" y1="464.5" x2="697" y2="464.5" stroke="#e8e8e8" stroke-width="1"/>
<line x1="30" y1="486.5" x2="697" y2="486.5" stroke="#e8e8e8" stroke-width="1"/>
<line x1="30" y1="509.5" x2="697" y2="509.5" stroke="#e8e8e8" stroke-width="1"/>
<line x1="107.5" y1="242" x2="107.5" y2="509" stroke="#e8e8e8" stroke-width="1"/>
<line x1="198.5" y1="242" x2="198.5" y2="509" stroke="#e8e8e8" stroke-width="1"/>
<line x1="316.5" y1="242" x2="316.5" y2="509" stroke="#e8e8e8" stroke-width="1"/>
<line x1="393.5" y1="242" x2="393.5" y2="509" stroke="#e8e8e8" stroke-width="1"/>
<line x1="470.5" y1="242" x2="470.5" y2="509" stroke="#e8e8e8" stroke-width="1"/>
<line x1="548.5" y1="242" x2="548.5" y2="509" stroke="#e8e8e8" stroke-width="1"/>
<line x1="625.5" y1="242" x2="625.5" y2="509" stroke="#e8e8e8" stroke-width="1"/>
<rect x="107" y="242" width="209.0" height="22.25" rx="0" fill="#ed7d31"/>
<rect x="107" y="264.25" width="209.0" height="111.25" rx="0" fill="#c6e0b4"/>
<line x1="107" y1="242.5" x2="316.5" y2="242.5" stroke="#34443a" stroke-width="1"/>
<line x1="107" y1="264.5" x2="316.5" y2="264.5" stroke="#34443a" stroke-width="1"/>
<line x1="107" y1="286.5" x2="316.5" y2="286.5" stroke="#34443a" stroke-width="1"/>
<line x1="107" y1="308.5" x2="316.5" y2="308.5" stroke="#34443a" stroke-width="1"/>
<line x1="107" y1="331.5" x2="316.5" y2="331.5" stroke="#34443a" stroke-width="1"/>
<line x1="107" y1="353.5" x2="316.5" y2="353.5" stroke="#34443a" stroke-width="1"/>
<line x1="107" y1="375.5" x2="316.5" y2="375.5" stroke="#34443a" stroke-width="1"/>
<line x1="107.5" y1="242.5" x2="107.5" y2="375.5" stroke="#34443a" stroke-width="1"/>
<line x1="198.5" y1="242.5" x2="198.5" y2="375.5" stroke="#34443a" stroke-width="1"/>
<line x1="316.5" y1="242.5" x2="316.5" y2="375.5" stroke="#34443a" stroke-width="1"/>
<text x="111.3" y="259.4" font-size="14.6" fill="#1d1208" textLength="30.7" lengthAdjust="spacingAndGlyphs" font-weight="bold">Date</text>
<text x="201.7" y="259.4" font-size="14.6" fill="#1d1208" textLength="64.6" lengthAdjust="spacingAndGlyphs" font-weight="bold">Weekday</text>
<text x="154" y="281.65" font-size="15.6" fill="#111111" textLength="41.7" lengthAdjust="spacingAndGlyphs">42370</text>
<text x="154" y="303.9" font-size="15.6" fill="#111111" textLength="41.7" lengthAdjust="spacingAndGlyphs">42370</text>
<text x="154" y="326.15" font-size="15.6" fill="#111111" textLength="41.7" lengthAdjust="spacingAndGlyphs">42370</text>
<text x="154" y="348.4" font-size="15.6" fill="#111111" textLength="41.7" lengthAdjust="spacingAndGlyphs">42370</text>
<text x="154" y="370.65" font-size="15.6" fill="#111111" textLength="41.7" lengthAdjust="spacingAndGlyphs">42370</text>
<text x="313" y="281.65" font-size="15.6" fill="#111111" text-anchor="end">6</text>
<text x="313" y="303.9" font-size="15.6" fill="#111111" text-anchor="end">5</text>
<text x="313" y="326.15" font-size="15.6" fill="#111111" text-anchor="end">4</text>
<text x="313" y="348.4" font-size="15.6" fill="#111111" text-anchor="end">1</text>
<line x1="198.5" y1="331.5" x2="316.5" y2="331.5" stroke="#2f6440" stroke-width="1.1"/>
<line x1="198.5" y1="353.5" x2="316.5" y2="353.5" stroke="#2f6440" stroke-width="1.1"/>
<line x1="198.5" y1="354.5" x2="314" y2="354.5" stroke="#eef6ea" stroke-width="1"/>
<line x1="199.5" y1="332.5" x2="199.5" y2="353.5" stroke="#e6f0e0" stroke-width="1"/>
<rect x="314.3" y="351.7" width="3.3" height="3.3" rx="0" fill="#217346"/>
<rect x="295.5" y="331.5" width="29" height="29.5" rx="0" fill="none" stroke="#cf2a2f" stroke-width="3"/>
<rect x="697" y="220" width="15" height="289" rx="0" fill="#151515"/>
<path d="M702.2,231.3 L706.7,224.3 L711.2,231.3 Z" stroke="none" fill="#9a9a9a" stroke-width="1" />
<rect x="703.2" y="235.3" width="7" height="155.5" rx="3.5" fill="#9a9a9a"/>
<rect x="697" y="498" width="15" height="11" rx="0" fill="#151515"/>
<path d="M702.2,500.5 L706.7,507 L711.2,500.5 Z" stroke="none" fill="#9a9a9a" stroke-width="1" />
<rect x="0" y="509" width="712" height="30" rx="0" fill="#1c1d1a"/>
<line x1="0" y1="509.8" x2="712" y2="509.8" stroke="#0a0a0a" stroke-width="1.5"/>
<path d="M26,519 L21,523.7 L26,528.4" stroke="#9a9a9a" fill="none" stroke-width="1.1" />
<path d="M50.5,519 L55.5,523.7 L50.5,528.4" stroke="#9a9a9a" fill="none" stroke-width="1.1" />
<rect x="99" y="510.3" width="53.5" height="25" rx="5" fill="#ffffff"/>
<text x="107.3" y="526.6" font-size="12.6" fill="#262626" stroke="#262626" stroke-width="0.45" textLength="36.7" lengthAdjust="spacingAndGlyphs">Sheet1</text>
<rect x="107.3" y="530.4" width="36.7" height="1.6" rx="0" fill="#1e7145"/>
<line x1="155.3" y1="517" x2="155.3" y2="531.5" stroke="#7a7a7a" stroke-width="1"/>
<path d="M198.5,518.7 V528.5 M193.5,523.6 H203.5" stroke="#d8d8d8" fill="none" stroke-width="1.1" />
<rect x="430.8" y="519.3" width="2" height="2" rx="0" fill="#e0e0e0"/>
<rect x="430.8" y="523" width="2" height="2" rx="0" fill="#e0e0e0"/>
<rect x="430.8" y="526.7" width="2" height="2" rx="0" fill="#e0e0e0"/>
<rect x="448.7" y="516.4" width="254.3" height="14.4" rx="7.2" fill="#0f0f0f"/>
<path d="M457,520 L451.5,523.7 L457,527.4 Z" stroke="none" fill="#8e8e8e" stroke-width="1" />
<rect x="462" y="520" width="193.5" height="7.5" rx="3.75" fill="#9a9a9a"/>
<path d="M687.5,520 L693,523.7 L687.5,527.4 Z" stroke="none" fill="#8e8e8e" stroke-width="1" />
<rect x="0" y="539" width="712" height="16" rx="0" fill="#161616"/>
<line x1="0" y1="539" x2="712" y2="539" stroke="#2a2a2a" stroke-width="1"/>
<text x="10" y="553.3" font-size="10.5" fill="#e0e0e0" stroke="#e0e0e0" stroke-width="0.25" textLength="26" lengthAdjust="spacingAndGlyphs">Ready</text>
<path d="M57,552.8 H52.6 V543.5 H64.5 V547.5" stroke="#e0e0e0" fill="none" stroke-width="1.1" />
<rect x="52.6" y="543.5" width="11.9" height="2.2" rx="0" fill="#e0e0e0"/>
<path d="M54,547.8 H56.5 M54,549.7 H56.5 M54,551.6 H56.5" stroke="#e0e0e0" fill="none" stroke-width="0.9" />
<circle cx="60.8" cy="551.2" r="3.3" stroke="#e0e0e0" fill="#161616" stroke-width="1.1"/><circle cx="60.8" cy="551.2" r="1.4" fill="#e0e0e0"/>
<circle cx="85.9" cy="544.4" r="1.4" stroke="#e0e0e0" fill="none" stroke-width="1"/>
<path d="M80.8,545.3 Q82,547.5 84,547.3 V550 L82.5,554.5 M87.8,547.3 Q90,547.5 91,545.3 M87.8,547.3 V549.5" stroke="#e0e0e0" fill="none" stroke-width="1.1" />
<path d="M86.6,552.2 L88.3,554.2 L93.6,549.3" stroke="#e0e0e0" fill="none" stroke-width="1.1" />
<text x="96" y="553.3" font-size="10.5" fill="#e0e0e0" stroke="#e0e0e0" stroke-width="0.25" textLength="103" lengthAdjust="spacingAndGlyphs">Accessibility: Good to go</text>
<rect x="436.4" y="539.5" width="37" height="15.5" rx="0" fill="#262626"/>
<line x1="448" y1="542.8" x2="448" y2="554" stroke="#e0e0e0" stroke-width="1.1"/>
<line x1="448" y1="542.8" x2="460" y2="542.8" stroke="#e0e0e0" stroke-width="1.1"/>
<line x1="452" y1="542.8" x2="452" y2="554" stroke="#e0e0e0" stroke-width="1.1"/>
<line x1="448" y1="546.53" x2="460" y2="546.53" stroke="#e0e0e0" stroke-width="1.1"/>
<line x1="456" y1="542.8" x2="456" y2="554" stroke="#e0e0e0" stroke-width="1.1"/>
<line x1="448" y1="550.26" x2="460" y2="550.26" stroke="#e0e0e0" stroke-width="1.1"/>
<line x1="460" y1="542.8" x2="460" y2="554" stroke="#e0e0e0" stroke-width="1.1"/>
<line x1="448" y1="553.99" x2="460" y2="553.99" stroke="#e0e0e0" stroke-width="1.1"/>
<rect x="484.5" y="542.5" width="12.8" height="10.8" rx="0" fill="none" stroke="#e0e0e0" stroke-width="1.1"/>
<rect x="487.3" y="544.8" width="7.2" height="6.4" rx="0" fill="none" stroke="#e0e0e0" stroke-width="1"/>
<path d="M488.8,546.6 H493 M488.8,548 H493 M488.8,549.4 H493" stroke="#e0e0e0" fill="none" stroke-width="0.8" />
<path d="M520.5,542.6 H533 V553.3 H520.5 Z M523.2,542.6 V548.4 H528 V542.6" stroke="#e0e0e0" fill="none" stroke-width="1.1" />
<line x1="549.8" y1="548" x2="556" y2="548" stroke="#e0e0e0" stroke-width="1"/>
<line x1="561.5" y1="548" x2="651.7" y2="548" stroke="#8a8a8a" stroke-width="1.2"/>
<rect x="603.8" y="542.2" width="5.7" height="11" rx="0" fill="#9a9a9a"/>
<path d="M659.7,543 V553 M654.7,548 H664.7" stroke="#e0e0e0" fill="none" stroke-width="1" />
<text x="674.3" y="553.3" font-size="10.5" fill="#e0e0e0" stroke="#e0e0e0" stroke-width="0.25" textLength="24.7" lengthAdjust="spacingAndGlyphs">100%</text>
</svg>
</body></html>
